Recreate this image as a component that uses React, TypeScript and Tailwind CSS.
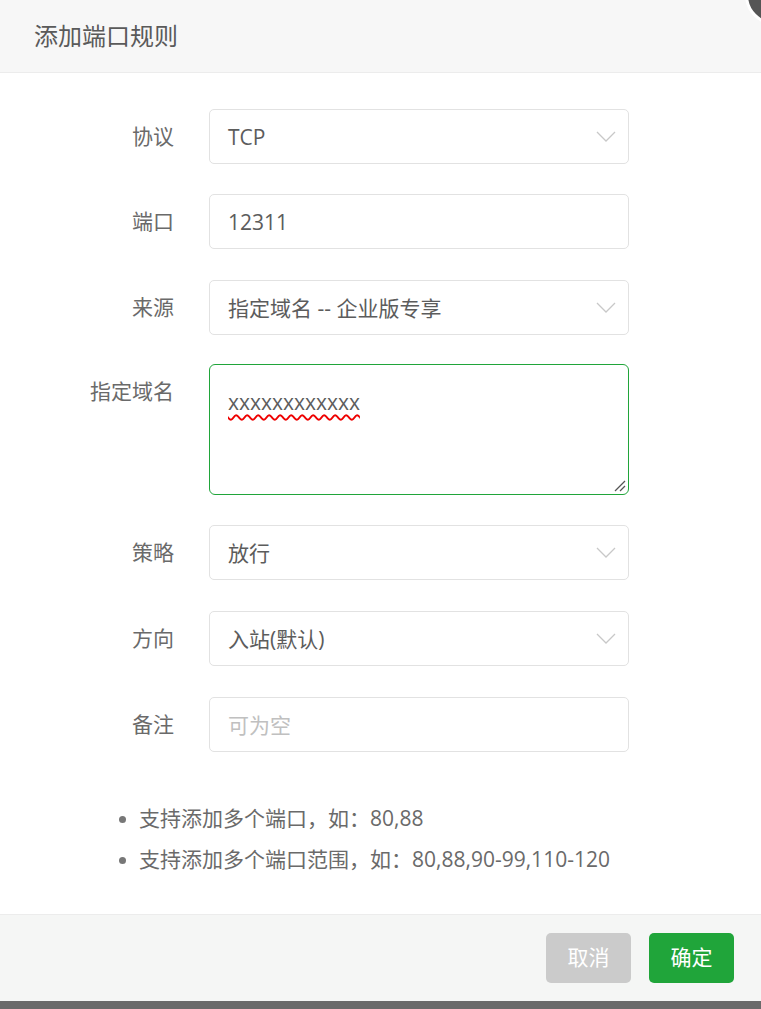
import React from "react";

const Chevron = () => (
  <svg width="20" height="12" viewBox="0 0 20 12" className="shrink-0">
    <polyline points="1,1 10,10 19,1" fill="none" stroke="#c8c8c8" strokeWidth="1.3" />
  </svg>
);

const Row = ({
  label,
  children,
  top,
  className = "",
}: {
  label: string;
  children: React.ReactNode;
  top?: boolean;
  className?: string;
}) => (
  <div className={`flex ${top ? "items-start" : "items-center"} ${className}`}>
    <div className={`w-[174px] shrink-0 text-right text-[21px] text-[#6a6a6a] ${top ? "pt-[12px]" : ""}`}>{label}</div>
    <div className="ml-[35px] w-[420px]">{children}</div>
  </div>
);

const Select = ({ value }: { value: string }) => (
  <div className="flex h-[55px] items-center justify-between rounded-[5px] border border-[#e2e2e2] pl-[18px] pr-[12px] text-[21px] text-[#5c5c5c]">
    <span className="pt-[2px]">{value}</span>
    <Chevron />
  </div>
);

const Input = ({ value, placeholder }: { value?: string; placeholder?: string }) => (
  <div className="flex h-[55px] items-center rounded-[5px] border border-[#e2e2e2] px-[18px] text-[21px]">
    {value ? (
      <span className="pt-[2px] text-[#5c5c5c]">{value}</span>
    ) : (
      <span className="pt-[2px] text-[#c0c0c0]">{placeholder}</span>
    )}
  </div>
);

export default function App() {
  return (
    <div
      className="relative h-[1009px] w-[761px] overflow-hidden bg-[#6a6a6a]"
      style={{ fontFamily: '"Open Sans", "Noto Sans CJK SC", sans-serif' }}
    >
      <div className="flex h-[1001px] flex-col bg-white">
        <div className="flex h-[73px] shrink-0 items-center border-b border-[#ececec] bg-[#f7f7f7] pl-[34px] text-[24px] text-[#5a5a5a]">
          添加端口规则
        </div>

        <div className="flex-1 pt-[36px]">
          <div className="flex flex-col gap-[30px]">
            <Row label="协议">
              <Select value="TCP" />
            </Row>
            <Row label="端口">
              <Input value="12311" />
            </Row>
            <Row label="来源" className="mt-[1px]">
              <Select value="指定域名 -- 企业版专享" />
            </Row>
            <Row label="指定域名" top className="mt-[-1px]">
              <div className="relative h-[131px] rounded-[6px] border border-[#20a53a] px-[18px] pt-[22px] text-[21px] text-[#5c5c5c]">
                <span className="underline decoration-[#e00] decoration-wavy decoration-[1.5px] underline-offset-[4px]">
                  xxxxxxxxxxxx
                </span>
                <svg width="12" height="12" viewBox="0 0 12 12" className="absolute bottom-[2px] right-[2px]">
                  <line x1="1" y1="11" x2="11" y2="1" stroke="#555" strokeWidth="1.3" />
                  <line x1="6" y1="11" x2="11" y2="6" stroke="#555" strokeWidth="1.3" />
                </svg>
              </div>
            </Row>
            <Row label="策略">
              <Select value="放行" />
            </Row>
            <Row label="方向" className="mt-[1px]">
              <Select value="入站(默认)" />
            </Row>
            <Row label="备注" className="mt-[1px]">
              <Input placeholder="可为空" />
            </Row>
          </div>

          <ul className="mt-[46px] pl-[139px] text-[21px] text-[#6a6a6a]">
            <li className="relative h-[41px] leading-[41px]">
              <span className="absolute left-[-20px] top-[18px] h-[7px] w-[7px] rounded-full bg-[#777]" />
              支持添加多个端口，如：80,88
            </li>
            <li className="relative h-[41px] leading-[41px]">
              <span className="absolute left-[-20px] top-[18px] h-[7px] w-[7px] rounded-full bg-[#777]" />
              支持添加多个端口范围，如：80,88,90-99,110-120
            </li>
          </ul>
        </div>

        <div className="flex h-[87px] shrink-0 items-center justify-end gap-[18px] border-t border-[#ececec] bg-[#f5f6f5] pr-[27px]">
          <button className="h-[50px] w-[85px] rounded-[5px] bg-[#cbcbcb] text-[21px] text-white">取消</button>
          <button className="h-[50px] w-[85px] rounded-[5px] bg-[#20a53a] text-[21px] text-white">确定</button>
        </div>
      </div>

      <div className="absolute left-[745px] top-[-35px] h-[60px] w-[60px] rounded-full border-[3px] border-white bg-[#555]" />
    </div>
  );
}
